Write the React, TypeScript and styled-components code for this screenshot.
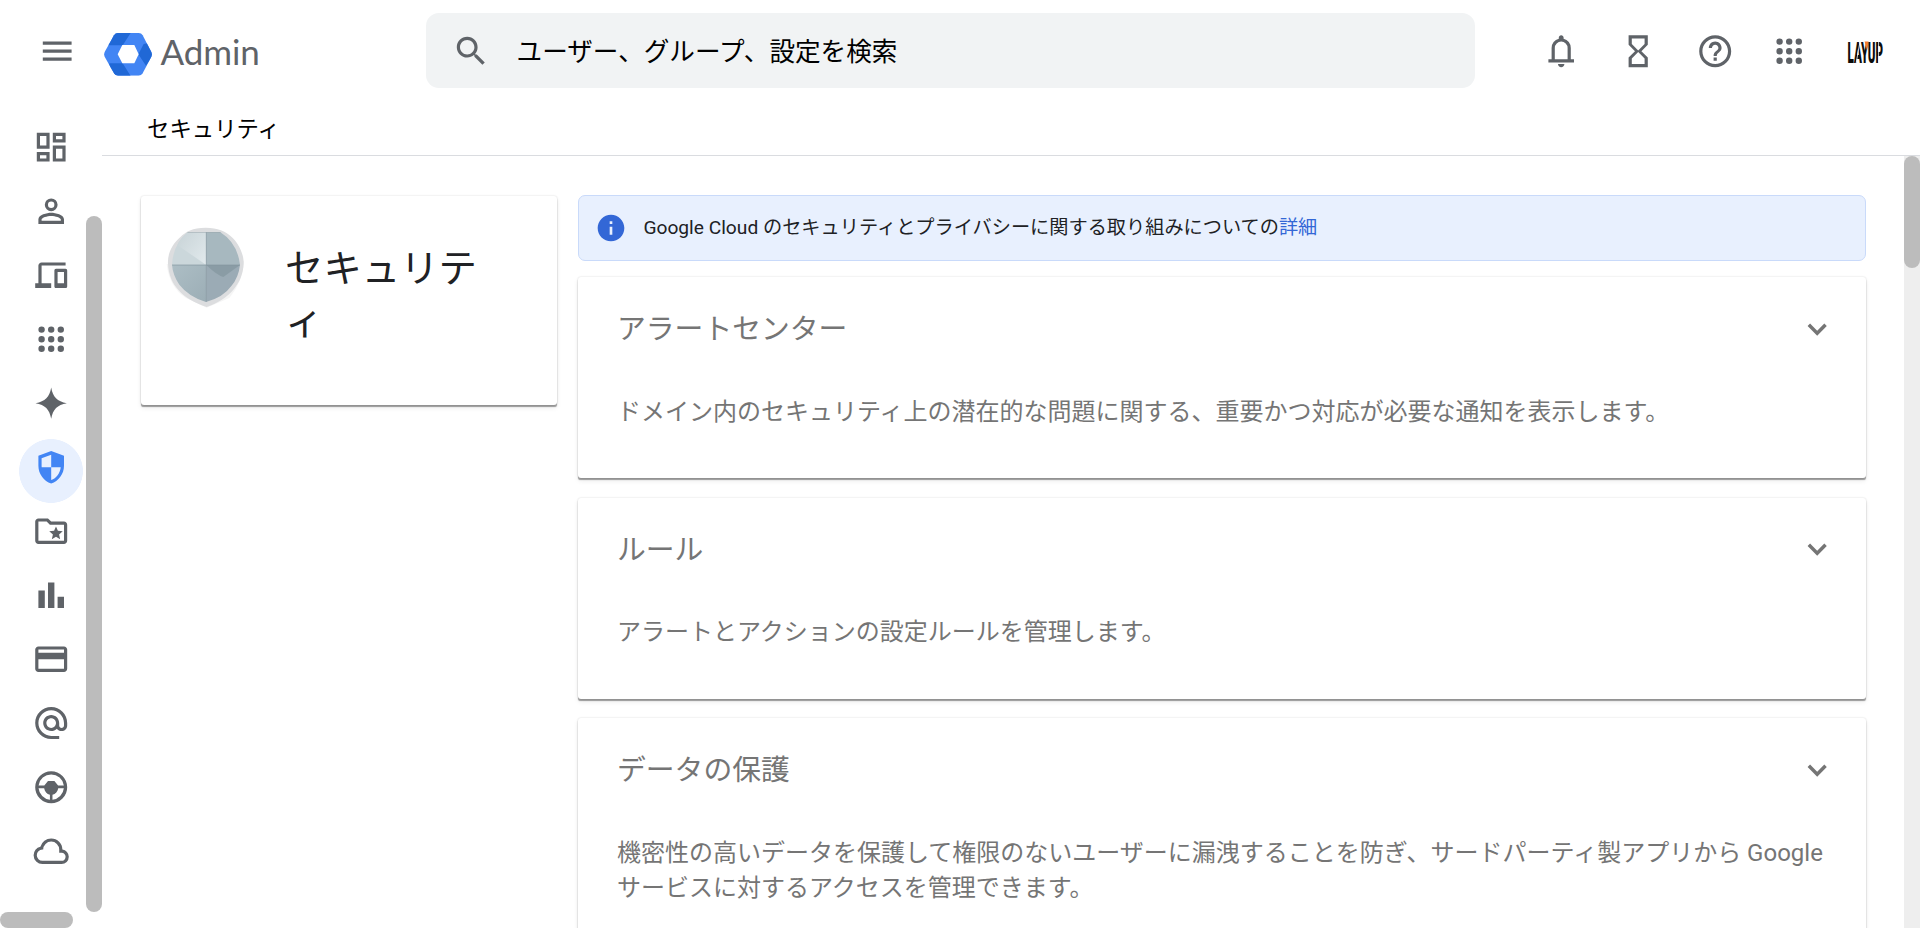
import React from "react";
import styled, { createGlobalStyle } from "styled-components";

const GlobalStyle = createGlobalStyle`
  *, *::before, *::after { box-sizing: border-box; }
  body {
    margin: 0;
    overflow: hidden;
    background: #fff;
    font-family: Roboto, "Noto Sans CJK JP", sans-serif;
  }
  h1, h2, p { margin: 0; font-weight: 400; }
`;

const Page = styled.div`
  display: flex;
  flex-direction: column;
  height: 928px;
  overflow: hidden;
  background: #fff;
`;

const Header = styled.header`
  display: flex;
  align-items: center;
  flex: none;
  height: 102px;
  padding: 0 29.4px 0 37.6px;
  color: #5f6368;
`;

const MenuButton = styled.div`
  display: flex;
  width: 66px;
  flex: none;
`;

const Brand = styled.div`
  display: flex;
  align-items: center;
  width: 322.4px;
  flex: none;
  gap: 9px;
  padding-top: 6px;
`;

const BrandName = styled.span`
  margin-top: -7px;
  color: #5f6368;
  font: 400 35px/44px Lato, sans-serif;
  letter-spacing: -0.1px;
`;

const SearchBar = styled.div`
  display: flex;
  align-items: center;
  gap: 26px;
  width: 1048.6px;
  height: 75px;
  margin-top: -1px;
  padding: 1px 0 0 26.2px;
  border-radius: 13px;
  background: #f1f3f4;
`;

const SearchHint = styled.span`
  margin-top: -3.5px;
  color: #000;
  font-size: 25.6px;
`;

const Actions = styled.div`
  display: flex;
  align-items: center;
  margin-left: auto;
`;

const Action = styled.div<{ $gap: number }>`
  display: flex;
  margin-right: ${(p) => p.$gap}px;
`;

const Body = styled.div`
  display: flex;
  flex: 1;
  min-height: 0;
`;

const SideBar = styled.aside`
  display: grid;
  grid-template: 1fr 16px / 86px 16px;
  flex: none;
  width: 102px;
`;

const NavList = styled.nav`
  display: flex;
  flex-direction: column;
  padding: 13px 0 0 19px;
`;

const NavItem = styled.div<{ $active?: boolean }>`
  display: flex;
  flex: none;
  justify-content: center;
  align-items: flex-start;
  width: 64px;
  height: 64px;
  padding-top: 12.8px;
  color: ${(p) => (p.$active ? "#4285f4" : "#5f6368")};
  background: ${(p) => (p.$active ? "radial-gradient(circle, #e8f0fe 31.6px, transparent 32.2px)" : "none")};
  ${(p) => p.$active && "margin: 4px 0 -4px; padding-top: 8.8px;"}
`;

const SideThumb = styled.div`
  margin-top: 114px;
  border-radius: 8px;
  background: #bcbcbc;
`;

const BottomThumb = styled.div`
  width: 73px;
  border-radius: 8px;
  background: #bcbcbc;
`;

const Main = styled.main`
  display: flex;
  flex: 1;
  flex-direction: column;
  min-width: 0;
`;

const Breadcrumb = styled.div`
  flex: none;
  height: 54px;
  padding-left: 45px;
  border-bottom: 1px solid #dadce0;
  color: #000;
  font-size: 22.4px;
  line-height: 55px;
`;

const Viewport = styled.div`
  display: flex;
  flex: 1;
  min-height: 0;
  overflow: hidden;
`;

const Content = styled.div`
  display: flex;
  flex: 1;
  align-items: flex-start;
  gap: 21px;
  padding: 39px 38px 0 39px;
`;

const PageTrack = styled.div`
  width: 16px;
  flex: none;
  background: #eee;
`;

const PageThumb = styled.div`
  height: 112px;
  border-radius: 8px;
  background: #bcbcbc;
`;

const Card = styled.section`
  border-radius: 3px;
  background: #fff;
  box-shadow: 0 1.6px 1px -0.4px rgba(0, 0, 0, 0.36), 0 0 2px rgba(0, 0, 0, 0.16), 0 3px 5px rgba(0, 0, 0, 0.08);
`;

const TitleCard = styled(Card)`
  display: flex;
  flex: none;
  gap: 37px;
  width: 416px;
  height: 209px;
  margin-top: 1px;
  padding: 28px 24px 28px 25px;
`;

const PageTitle = styled.h1`
  width: 200px;
  margin-top: 19px;
  color: #202124;
  font-size: 38.4px;
  line-height: 52px;
  word-break: break-all;
`;

const Column = styled.div`
  flex: 1;
  min-width: 0;
`;

const Banner = styled.div`
  display: flex;
  align-items: center;
  gap: 16px;
  height: 66px;
  margin-bottom: 16px;
  padding-left: 16.4px;
  border: 1px solid #c9dafa;
  border-radius: 7px;
  background: #e8f0fe;
  color: #202124;
  font-size: 19.2px;
`;

const BannerIcon = styled.span`
  display: flex;
  color: #3367d6;
`;

const BannerText = styled.p`
  margin-top: -5px;
`;

const BannerLink = styled.span`
  color: #3367d6;
`;

const SettingCard = styled(Card)`
  height: 201px;
  margin-bottom: 19.5px;
  padding: 32px 29.6px 0 39px;
  color: #757575;

  &:last-child { height: 240px; }
`;

const CardHead = styled.div`
  display: flex;
  align-items: center;
  justify-content: space-between;
  height: 40px;
`;

const CardTitle = styled.h2`
  font-size: 28.8px;
  line-height: 40px;
`;

const CardText = styled.p`
  margin-top: 45.5px;
  font-size: 24px;
  line-height: 35.2px;
`;

const AvatarMark = styled.svg`
  overflow: visible;
`;

const Icon = ({ d, size = 38.4 }: { d: string; size?: number }) => (
  <svg width={size} height={size} viewBox="0 0 24 24" fill="currentColor" fillRule="evenodd">
    <path d={d} />
  </svg>
);

const DOTS = [6, 12, 18]
  .flatMap((y) => [6, 12, 18].map((x) => `M${x - 2} ${y}a2 2 0 1 0 4 0a2 2 0 1 0-4 0z`))
  .join("");

const ICONS = {
  menu: "M3 18h18v-2H3v2zm0-5h18v-2H3v2zm0-7v2h18V6H3z",
  search:
    "M15.5 14h-.79l-.28-.27C15.41 12.59 16 11.11 16 9.5 16 5.91 13.09 3 9.5 3S3 5.91 3 9.5 5.91 16 9.5 16c1.61 0 3.09-.59 4.23-1.57l.27.28v.79l5 4.99L20.49 19l-4.99-5zm-6 0C7.01 14 5 11.99 5 9.5S7.01 5 9.5 5 14 7.01 14 9.5 11.99 14 9.5 14z",
  bell: "M4 19V17H6V10Q6 7.93 7.25 6.31 8.5 4.7 10.5 4.2V3.5Q10.5 2.88 10.94 2.44 11.38 2 12 2 12.63 2 13.06 2.44 13.5 2.88 13.5 3.5V4.2Q15.5 4.7 16.75 6.31 18 7.93 18 10V17H20V19ZM12 22Q11.18 22 10.59 21.41 10 20.83 10 20H14Q14 20.83 13.41 21.41 12.83 22 12 22ZM8 17H16V10Q16 8.35 14.83 7.18 13.65 6 12 6 10.35 6 9.18 7.18 8 8.35 8 10Z",
  hourglass:
    "M6 2v6h.01L6 8.01 10 12l-4 4 .01.01H6V22h12v-5.99h-.01L18 16l-4-4 4-3.99-.01-.01H18V2H6zm10 14.5V20H8v-3.5l4-4 4 4zm-4-5l-4-4V4h8v3.5l-4 4z",
  help: "M11 18h2v-2h-2v2zm1-16C6.48 2 2 6.48 2 12s4.48 10 10 10 10-4.48 10-10S17.52 2 12 2zm0 18c-4.41 0-8-3.59-8-8s3.59-8 8-8 8 3.59 8 8-3.59 8-8 8zm0-14c-2.21 0-4 1.79-4 4h2c0-1.1.9-2 2-2s2 .9 2 2c0 2-3 1.75-3 5h2c0-2.25 3-2.5 3-5 0-2.21-1.79-4-4-4z",
  apps: DOTS,
  dashboard:
    "M19 5v2h-4V5h4M9 5v6H5V5h4m10 8v6h-4v-6h4M9 17v2H5v-2h4M21 3h-8v6h8V3zM11 3H3v10h8V3zm10 8h-8v10h8V11zm-10 4H3v6h8v-6z",
  person:
    "M12 6a2 2 0 1 1 0 4a2 2 0 1 1 0-4M12 4a4 4 0 1 0 0 8a4 4 0 1 0 0-8zM12 15c2.7 0 5.8 1.2 6 2v1H6v-1c.2-.8 3.3-2 6-2M12 13c-2.67 0-8 1.34-8 4v3h16v-3c0-2.66-5.33-4-8-4z",
  devices:
    "M6 6h15V4H6c-1.1 0-2 .9-2 2v11H2v3h10v-3H6V6zM21 8h-6c-.55 0-1 .45-1 1v10c0 .55.45 1 1 1h6c.55 0 1-.45 1-1V9c0-.55-.45-1-1-1zM20 17h-4v-7h4v7z",
  sparkle: "M12 2.2C13.1 8.3 15.7 10.9 21.8 12C15.7 13.1 13.1 15.7 12 21.8C10.9 15.7 8.3 13.1 2.2 12C8.3 10.9 10.9 8.3 12 2.2z",
  shield:
    "M12 1.8L4 4.9v6.19c0 5.05 3.41 9.76 8 11.1 4.59-1.34 8-6.05 8-11.1V4.9l-8-3.1zM12 4.2V12H6.05L6 11.1V6.4zM12 12h5.95c-.4 3.8-2.7 6.9-5.95 8z",
  folder:
    "M20 6h-8l-2-2H4c-1.1 0-2 .9-2 2v12c0 1.1.9 2 2 2h16c1.1 0 2-.9 2-2V8c0-1.1-.9-2-2-2zm0 12H4V6h5.17l2 2H20v10zM13.08 14.04L12.39 17 15 15.47 17.61 17l-.69-2.96 2.3-1.99-3.03-.26L15 9l-1.19 2.79-3.03.26z",
  bars: "M4 9h4v11H4zM10 4h4v16h-4zM16 13h4v7h-4z",
  card: "M20 4H4c-1.11 0-1.99.89-1.99 2L2 18c0 1.11.89 2 2 2h16c1.11 0 2-.89 2-2V6c0-1.11-.89-2-2-2zm0 14H4v-6h16v6zm0-10H4V6h16v2z",
  at: "M12 1.95c-5.52 0-10 4.48-10 10s4.48 10 10 10h5v-2h-5c-4.34 0-8-3.66-8-8s3.66-8 8-8 8 3.66 8 8v1.43c0 .79-.71 1.57-1.5 1.57s-1.5-.78-1.5-1.57v-1.43c0-2.76-2.24-5-5-5s-5 2.24-5 5 2.24 5 5 5c1.38 0 2.64-.56 3.54-1.47.65.89 1.77 1.47 2.96 1.47 1.97 0 3.5-1.6 3.5-3.57v-1.43c0-5.52-4.48-10-10-10zm0 13c-1.66 0-3-1.34-3-3s1.34-3 3-3 3 1.34 3 3-1.34 3-3 3z",
  wheel:
    "M12 2a10 10 0 1 0 0 20a10 10 0 1 0 0-20zM12 4a8 8 0 0 1 7.9 6.9H16.3L14 8.2h-4L7.7 10.9H4.1A8 8 0 0 1 12 4zM4.1 12.7h3.5c.3 2.1 1.7 3.7 3.6 4.1v3.1A8 8 0 0 1 4.1 12.7zM12.8 19.9v-3.1c1.9-.4 3.3-2 3.6-4.1h3.5A8 8 0 0 1 12.8 19.9z",
  cloud:
    "M6.5 20Q4.22 20 2.61 18.43 1 16.85 1 14.58 1 12.63 2.175 11.1 3.35 9.57 5.25 9.15 5.875 6.85 7.75 5.425 9.625 4 12 4 14.93 4 16.96 6.04 19 8.07 19 11 20.73 11.2 21.86 12.5 23 13.78 23 15.5 23 17.38 21.69 18.69 20.38 20 18.5 20ZM6.5 18H18.5Q19.55 18 20.27 17.27 21 16.55 21 15.5 21 14.45 20.27 13.73 19.55 13 18.5 13H17V11Q17 8.93 15.54 7.46 14.08 6 12 6 9.93 6 8.46 7.46 7 8.93 7 11H6.5Q5.05 11 4.03 12.03 3 13.05 3 14.5 3 15.95 4.03 17 5.05 18 6.5 18Z",
  chevron: "M7.55 8.5L12 12.95l4.45-4.45L18 10.05l-6 6-6-6z",
  info: "M12 2C6.48 2 2 6.48 2 12s4.48 10 10 10 10-4.48 10-10S17.52 2 12 2zm1 15h-2v-6h2v6zm0-8h-2V7h2v2z",
};

const Logo = () => (
  <svg width="48" height="43" viewBox="0 0 144 129">
    <defs>
      <clipPath id="hex">
        <path d="M42 0H104Q112 0 116 7L142 57Q145 64 142 71L116 121Q112 128 104 128H42Q34 128 30 121L2 71Q-1 64 2 57L30 7Q34 0 42 0z" />
      </clipPath>
    </defs>
    <g clipPath="url(#hex)">
      <path fill="#4285f4" d="M0 0h144v129H0z" />
      <path fill="#2068d6" d="M16 0H80L56 37H0zM119 33L135 30L150 64L126 98L103 64zM16 91H56L80 129H16z" />
    </g>
    <path fill="#fff" d="M55 36H91L104 64L91 91H55L41 64z" />
  </svg>
);

const Avatar = () => (
  <AvatarMark width="51" height="51" viewBox="0 0 51 51">
    <g transform="translate(7.6 36.8) scale(1 1.94)" fontFamily="Roboto" fontWeight="900" fontSize="15" fill="#0c0c0c">
      <text textLength="35.4" lengthAdjust="spacingAndGlyphs">LAYUP</text>
    </g>
    <path d="M16.2 36.8L20 15.5M38.6 15V36.8" stroke="#fff" strokeWidth=".8" />
    <path d="M24.6 15.6h4l-1.6 9z" fill="#f47b30" />
  </AvatarMark>
);

const Emblem = () => (
  <svg width="82" height="88" viewBox="0 0 246 264">
    <defs>
      <clipPath id="emblem">
        <path d="M66 24H162Q214 56 222 122Q218 160 196 186Q172 220 120 234Q68 218 40 182Q20 152 18 122Q22 58 66 24z" />
      </clipPath>
      <linearGradient id="shine" x1="0" y1="0" x2="1" y2="1">
        <stop offset="0" stopColor="#c3cfd3" />
        <stop offset="1" stopColor="#e2eaed" />
      </linearGradient>
      <linearGradient id="steel" x1="0" y1="0" x2="1" y2="1">
        <stop offset="0" stopColor="#aebfc6" />
        <stop offset="1" stopColor="#9badb5" />
      </linearGradient>
    </defs>
    <path fill="#f5f5f5" d="M2 120Q10 190 60 222L122 251L190 222Q232 170 234 110z" />
    <path fill="#dcdddf" d="M119 11C80 11 58 24 44 38C16 62 4 92 6 120C9 184 52 226 122 249C190 226 231 178 233 118C233 86 216 56 196 38C178 22 156 11 119 11z" />
    <g clipPath="url(#emblem)">
      <path fill="#cbd7db" d="M0 0h121v123H0z" />
      <path fill="url(#shine)" d="M24 56L50 0H121V123z" />
      <path fill="#a7b8bf" d="M121 0h125v123H121z" />
      <path fill="url(#steel)" d="M0 123h121v120H0z" />
      <path fill="#9babb5" d="M121 123h125v120H121z" />
      <path fill="#8a9ca5" d="M121 123h101l-50 36q-20-6-51-36z" />
      <path d="M121 20V240M10 123H230" stroke="#82949d" strokeWidth="2" />
      <path d="M60 24H170" stroke="#99a6ab" strokeWidth="3" />
    </g>
  </svg>
);

const NAV: (keyof typeof ICONS)[] = [
  "dashboard", "person", "devices", "apps", "sparkle", "shield",
  "folder", "bars", "card", "at", "wheel", "cloud",
];

const ACTIONS: { name: keyof typeof ICONS; gap: number }[] = [
  { name: "bell", gap: 38.3 },
  { name: "hourglass", gap: 38.6 },
  { name: "help", gap: 36 },
  { name: "apps", gap: 31 },
];

const SETTINGS = [
  {
    title: "アラートセンター",
    text: "ドメイン内のセキュリティ上の潜在的な問題に関する、重要かつ対応が必要な通知を表示します。",
  },
  { title: "ルール", text: "アラートとアクションの設定ルールを管理します。" },
  {
    title: "データの保護",
    text: "機密性の高いデータを保護して権限のないユーザーに漏洩することを防ぎ、サードパーティ製アプリから Google サービスに対するアクセスを管理できます。",
  },
];

export default function App() {
  return (
    <Page lang="ja">
      <GlobalStyle />
      <Header>
        <MenuButton>
          <Icon d={ICONS.menu} />
        </MenuButton>
        <Brand>
          <Logo />
          <BrandName>Admin</BrandName>
        </Brand>
        <SearchBar>
          <Icon d={ICONS.search} />
          <SearchHint>ユーザー、グループ、設定を検索</SearchHint>
        </SearchBar>
        <Actions>
          {ACTIONS.map((a) => (
            <Action key={a.name} $gap={a.gap}>
              <Icon d={ICONS[a.name]} />
            </Action>
          ))}
          <Avatar />
        </Actions>
      </Header>
      <Body>
        <SideBar>
          <NavList>
            {NAV.map((name) => (
              <NavItem key={name} $active={name === "shield"}>
                <Icon d={ICONS[name]} />
              </NavItem>
            ))}
          </NavList>
          <SideThumb />
          <BottomThumb />
        </SideBar>
        <Main>
          <Breadcrumb>セキュリティ</Breadcrumb>
          <Viewport>
            <Content>
              <TitleCard>
                <Emblem />
                <PageTitle>セキュリティ</PageTitle>
              </TitleCard>
              <Column>
                <Banner>
                  <BannerIcon>
                    <Icon d={ICONS.info} size={32} />
                  </BannerIcon>
                  <BannerText>
                    Google Cloud のセキュリティとプライバシーに関する取り組みについての<BannerLink>詳細</BannerLink>
                  </BannerText>
                </Banner>
                {SETTINGS.map((s) => (
                  <SettingCard key={s.title}>
                    <CardHead>
                      <CardTitle>{s.title}</CardTitle>
                      <Icon d={ICONS.chevron} />
                    </CardHead>
                    <CardText>{s.text}</CardText>
                  </SettingCard>
                ))}
              </Column>
            </Content>
            <PageTrack>
              <PageThumb />
            </PageTrack>
          </Viewport>
        </Main>
      </Body>
    </Page>
  );
}
